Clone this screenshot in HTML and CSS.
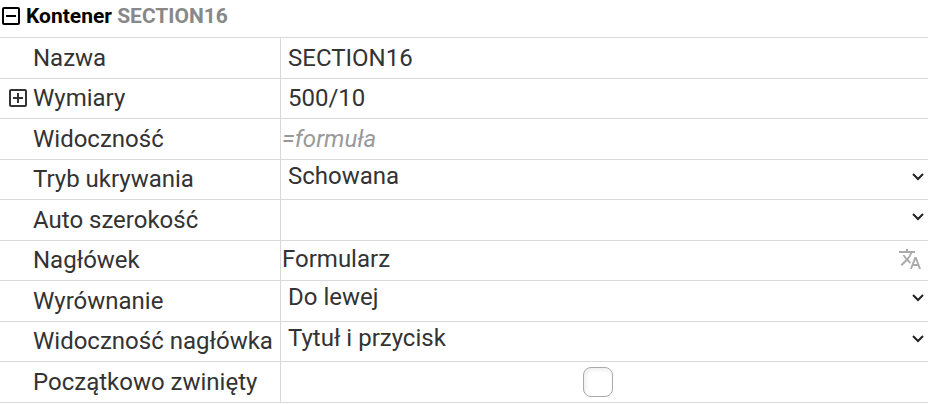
FILE: index.html
```
<!DOCTYPE html>
<html lang="pl">

<head>
    <meta charset="UTF-8">
    <meta name="viewport" content="width=device-width, initial-scale=1.0">
    <title>Kontener SECTION16</title>
    <link rel="stylesheet" href="styles.css">
</head>

<body>

    <h1 class="header">
        <button class="toggle" type="button" aria-label="Zwiń">
            <svg width="18" height="18" viewBox="0 0 18 18"><rect x="1" y="1" width="16" height="16" rx="1"/><path d="M4 9h10"/></svg>
        </button>
        <span>Kontener <span class="name">SECTION16</span></span>
    </h1>

    <table class="properties">
        <tbody>
            <tr>
                <th><label for="nazwa">Nazwa</label></th>
                <td><input class="field" id="nazwa" type="text" value="SECTION16"></td>
            </tr>
            <tr>
                <th>
                    <button class="toggle" type="button" aria-label="Rozwiń">
                        <svg width="18" height="18" viewBox="0 0 18 18"><rect x="1" y="1" width="16" height="16" rx="1"/><path d="M4 9h10M9 4v10"/></svg>
                    </button>
                    <label for="wymiary">Wymiary</label>
                </th>
                <td><input class="field" id="wymiary" type="text" value="500/10"></td>
            </tr>
            <tr>
                <th><label for="widocznosc">Widoczność</label></th>
                <td><input class="field flush" id="widocznosc" type="text" placeholder="=formuła"></td>
            </tr>
            <tr>
                <th><label for="tryb">Tryb ukrywania</label></th>
                <td class="choice">
                    <div class="select">
                        <select class="field" id="tryb"><option>Schowana</option></select>
                        <svg class="arrow" width="12" height="8" viewBox="0 0 12 8"><path d="M1 1l5 5 5-5"/></svg>
                    </div>
                </td>
            </tr>
            <tr>
                <th><label for="auto">Auto szerokość</label></th>
                <td class="choice">
                    <div class="select">
                        <select class="field" id="auto"><option></option></select>
                        <svg class="arrow" width="12" height="8" viewBox="0 0 12 8"><path d="M1 1l5 5 5-5"/></svg>
                    </div>
                </td>
            </tr>
            <tr>
                <th><label for="naglowek">Nagłówek</label></th>
                <td>
                    <div class="translated">
                        <input class="field flush" id="naglowek" type="text" value="Formularz">
                        <button class="translate" type="button" aria-label="Tłumaczenia">
                            <svg width="24" height="24" viewBox="0 0 24 24"><path d="M12.87 15.07l-2.54-2.51.03-.03A17.52 17.52 0 0 0 14.07 6H17V4h-7V2H8v2H1v1.99h11.17C11.5 7.92 10.44 9.75 9 11.35 8.07 10.32 7.3 9.19 6.69 8h-2c.73 1.63 1.73 3.17 2.98 4.56l-5.09 5.02L4 19l5-5 3.11 3.11.76-2.04zM18.5 10h-2L12 22h2l1.12-3h4.75L21 22h2l-4.5-12zm-2.62 7l1.62-4.33L19.12 17h-3.24z"/></svg>
                        </button>
                    </div>
                </td>
            </tr>
            <tr>
                <th><label for="wyrownanie">Wyrównanie</label></th>
                <td class="choice">
                    <div class="select">
                        <select class="field" id="wyrownanie"><option>Do lewej</option></select>
                        <svg class="arrow" width="12" height="8" viewBox="0 0 12 8"><path d="M1 1l5 5 5-5"/></svg>
                    </div>
                </td>
            </tr>
            <tr>
                <th><label for="widnaglowka">Widoczność nagłówka</label></th>
                <td class="choice">
                    <div class="select">
                        <select class="field" id="widnaglowka"><option>Tytuł i przycisk</option></select>
                        <svg class="arrow" width="12" height="8" viewBox="0 0 12 8"><path d="M1 1l5 5 5-5"/></svg>
                    </div>
                </td>
            </tr>
            <tr>
                <th><label for="zwiniety">Początkowo zwinięty</label></th>
                <td class="check"><input class="checkbox" id="zwiniety" type="checkbox"></td>
            </tr>
        </tbody>
    </table>

</body>
</html>
```

FILE: styles.css
```
* {
    box-sizing: border-box;
}

body {
    font-family: Roboto, sans-serif;
    font-size: 24px;
    line-height: 32px;
    color: #333;
    background-color: #fff;
    margin: 0;
}

.header {
    display: flex;
    align-items: center;
    gap: 6px;
    margin: 0;
    padding: 0 2px 5px;
    border-bottom: 1px solid #d9d9d9;
    font-size: 21px;
    font-weight: bold;
    color: #000;
}

.name {
    color: #888;
}

.toggle,
.translate {
    display: flex;
    padding: 0;
    border: none;
    background: none;
    color: inherit;
    cursor: pointer;
}

.toggle svg {
    fill: none;
    stroke: currentColor;
    stroke-width: 2;
}

.properties {
    width: 100%;
    table-layout: fixed;
    border-collapse: separate;
    border-spacing: 0;
}

th, td {
    height: 40px;
    padding: 0 0 1px;
    border-bottom: 1px solid #d9d9d9;
}

tr:nth-child(odd) th,
tr:nth-child(odd) td {
    height: 41px;
}

th {
    width: 281px;
    padding-left: 33px;
    border-right: 1px solid #d9d9d9;
    font-weight: normal;
    text-align: left;
    white-space: nowrap;
}

th .toggle {
    float: left;
    margin: 7px 0 0 -24px;
}

.field {
    display: block;
    width: 100%;
    height: 32px;
    margin: 0;
    padding: 0 7px;
    border: none;
    outline: none;
    background: none;
    font: inherit;
    color: inherit;
    appearance: none;
}

.flush {
    padding-left: 1px;
}

.field::placeholder {
    color: #999;
    font-style: italic;
    opacity: 1;
}

.choice {
    vertical-align: top;
}

.select {
    position: relative;
}

.arrow {
    position: absolute;
    top: 13px;
    right: 4px;
    fill: none;
    stroke: #222;
    stroke-width: 2;
    pointer-events: none;
}

.translated {
    display: flex;
    align-items: center;
    padding: 0 6px 2px 0;
}

.translate svg {
    fill: #aaa;
}

.check {
    padding-right: 13px;
}

.checkbox {
    display: block;
    width: 30px;
    height: 30px;
    margin: 0 auto;
    border: 1px solid #aaa;
    border-radius: 8px;
    background-color: #fff;
    box-shadow: inset 2px 2px 4px #eee;
    appearance: none;
}
```
